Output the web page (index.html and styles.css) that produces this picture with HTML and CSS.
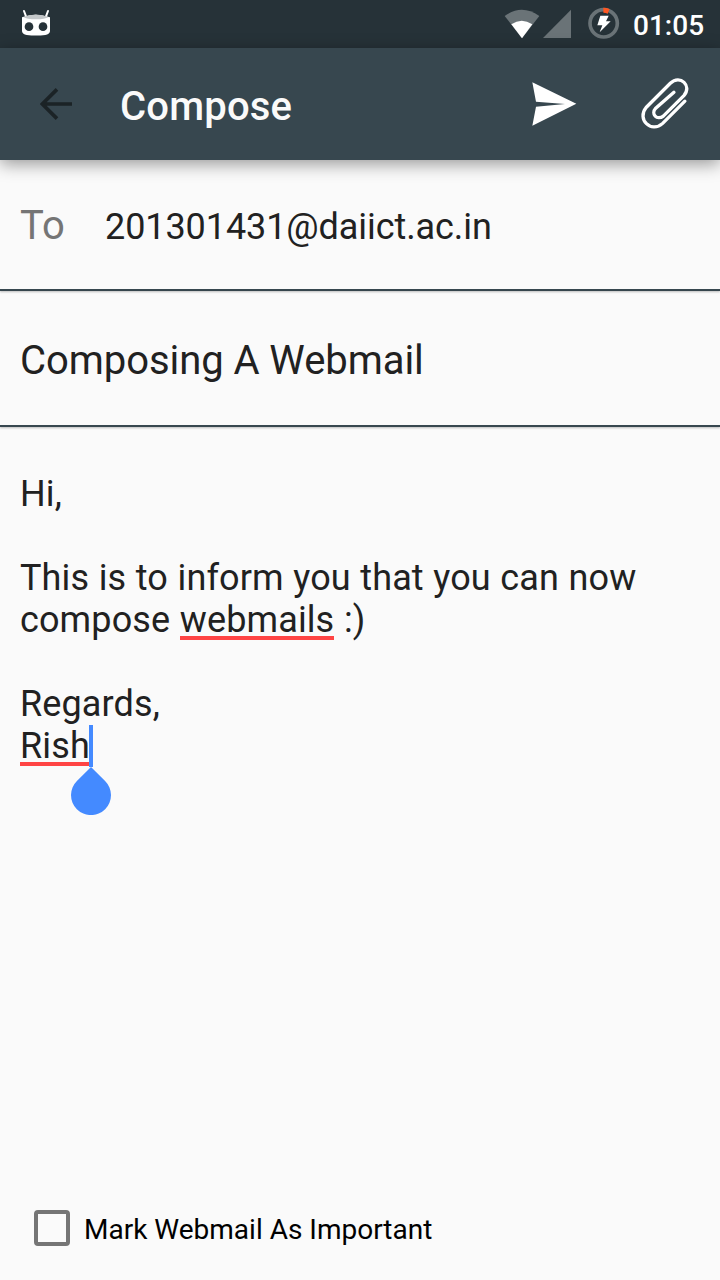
FILE: index.html
```html
<!DOCTYPE html>
<html lang="en">
<head>
<meta charset="utf-8">
<title>Compose</title>
<link rel="stylesheet" href="styles.css">
</head>
<body>
<div class="screen">
  <header class="status">
    <svg class="robot" viewBox="0 0 90 84">
      <path d="M9 6l6 16M81 6l-6 16" stroke="#fff" stroke-width="6" stroke-linecap="round"/>
      <path d="M3 25Q42 9 87 25V67Q85 77 73 78Q45 81 17 78Q5 77 3 67Z" fill="#fff"/>
      <path d="M7 24Q45 9 83 24Q72 31 45 31Q17 31 7 24Z" fill="#c3c7c9"/>
      <circle cx="24" cy="53" r="13" fill="#263238"/><circle cx="66" cy="53" r="13" fill="#263238"/>
    </svg>
    <svg class="signals" viewBox="0 0 345 144">
      <path d="M44 48Q95 11 148 48L96 115Z" fill="#6a7377"/>
      <path d="M64 73Q95 51 127 73L96 115Z" fill="#fff"/>
      <path d="M159 114L243 29V114Z" fill="#6a7377"/>
      <circle cx="341" cy="70" r="41" fill="none" stroke="#6a7377" stroke-width="11"/>
      <path d="M340 31A40 40 0 0 1 356 34" fill="none" stroke="#ff5722" stroke-width="15"/>
      <path d="M331 47H356L348 64H362L329 97L337 76H322Z" fill="#fff"/>
    </svg>
    <span class="clock">01:05</span>
  </header>
  <nav class="toolbar">
    <svg class="back" viewBox="0 0 96 96"><path d="M51 4L7 48L51 92M7 48H96" fill="none" stroke="#1b2326" stroke-width="11"/></svg>
    <h1 class="title">Compose</h1>
    <svg class="send" viewBox="0 0 138 138"><path d="M4 4L136 68L4 134L15 77L102 69L15 62Z" fill="#fff"/></svg>
    <svg class="clip" viewBox="0 0 144 160"><path d="M132 73L65 140C30 171-14 127 15 92L88 19C118-9 155 27 129 56L67 118C48 132 28 112 44 94L99 46" fill="none" stroke="#fff" stroke-width="10" stroke-linecap="round"/></svg>
  </nav>
  <main class="form">
    <div class="row recipient"><span class="label">To</span><span class="address">201301431@daiict.ac.in</span></div>
    <div class="row subject">Composing A Webmail</div>
    <div class="message">
      <p>Hi,</p>
      <p>This is to inform you that you can now<br>compose <span class="misspelt">webmails</span> :)</p>
      <p>Regards,<br><span class="misspelt">Rish<span class="caret"><svg class="handle" viewBox="0 0 40 48"><path d="M20 0L34.1 13.9A20 20 0 1 1 5.9 13.9Z" fill="#448aff"/></svg></span></span></p>
    </div>
    <label class="important"><span class="box"></span><span class="caption">Mark Webmail As Important</span></label>
  </main>
</div>
</body>
</html>
```
FILE: styles.css
```css
* { box-sizing: border-box; }
body { margin: 0; font-family: Roboto, sans-serif; background: #fafafa; color: #212121; }
svg { display: block; flex: none; }
.screen { width: 720px; height: 1280px; display: flex; flex-direction: column; overflow: hidden; }
.status { height: 48px; flex: none; background: #263238; display: flex; align-items: flex-start; padding-left: 21px; }
.robot { width: 30px; height: 28px; margin-top: 9px; }
.signals { width: 115px; height: 48px; margin-left: 439px; overflow: visible; }
.clock { margin-left: 28px; margin-top: 9px; font-size: 28px; line-height: 33px; font-weight: 500; color: #fff; }
.toolbar { height: 112px; flex: none; background: #37474f; display: flex; align-items: flex-start; padding-left: 40px; box-shadow: 0 4px 16px rgba(0,0,0,.4); position: relative; }
.back { width: 32px; height: 32px; margin-top: 40px; }
.title { margin: 35px 0 0 48px; width: 411px; font-size: 40px; line-height: 47px; font-weight: 500; letter-spacing: .2px; color: #fafafa; }
.send { width: 46px; height: 46px; margin-top: 33px; }
.clip { width: 48px; height: 53px; margin: 29px 0 0 64px; }
.form { flex: 1; display: flex; flex-direction: column; }
.row { flex: none; padding-left: 20px; border-bottom: 2px solid #37474f; box-shadow: 0 1px 2px rgba(0,0,0,.25); font-size: 40px; line-height: 47px; }
.recipient { height: 131px; padding-top: 42px; display: flex; align-items: baseline; }
.label { width: 85px; color: #757575; }
.address { font-size: 36px; letter-spacing: -.08px; }
.subject { height: 136px; padding-top: 46px; letter-spacing: -.06px; }
.message { flex: 1; padding: 46px 20px 0; font-size: 36px; line-height: 42px; letter-spacing: .12px; word-spacing: .5px; }
.message p { margin: 0 0 42px; }
.misspelt { display: inline-block; height: 42px; position: relative; }
.misspelt::after { content: ""; position: absolute; left: 0; right: 0; bottom: 1px; height: 4px; background: #ff4444; }
.caret { position: absolute; z-index: 1; left: 69px; top: 0; width: 4px; height: 42px; background: #448aff; }
.handle { position: absolute; left: -18px; top: 42px; width: 40px; height: 48px; }
.important { height: 104px; flex: none; display: flex; align-items: center; padding-left: 34px; gap: 14px; font-size: 28px; line-height: 33px; color: #000; }
.caption { padding-top: 3px; }
.box { width: 36px; height: 36px; border: 4px solid #757575; border-radius: 4px; }
```
